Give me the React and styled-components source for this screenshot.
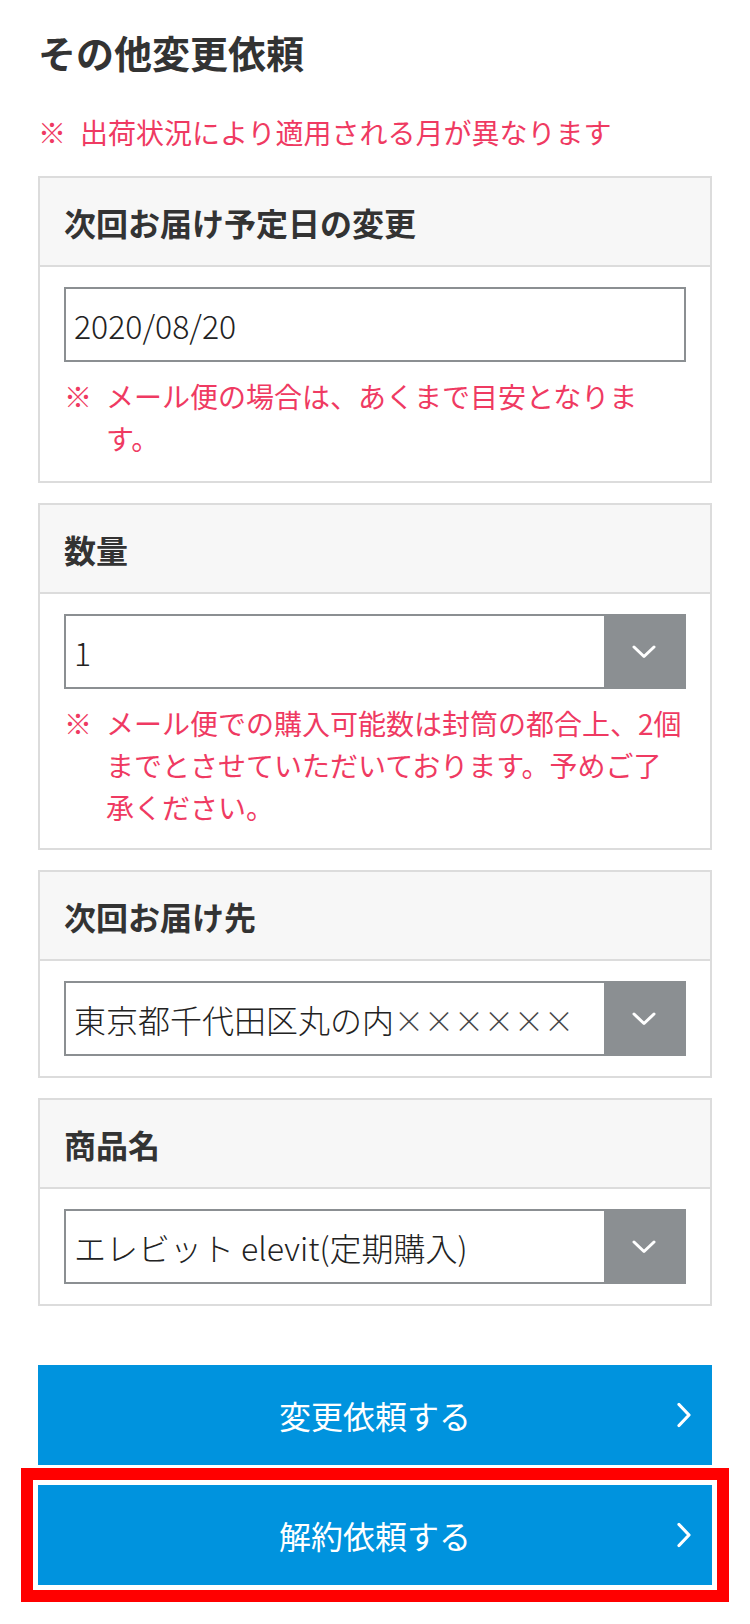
import React from "react";
import styled, { createGlobalStyle } from "styled-components";

const GlobalStyle = createGlobalStyle`
  html, body {
    margin: 0;
    padding: 0;
    background: #ffffff;
  }
  body {
    font-family: "Noto Sans CJK JP", "Noto Sans", sans-serif;
    color: #333333;
  }
`;

const Page = styled.div`
  width: 750px;
  box-sizing: border-box;
  padding: 25px 38px 38px;
`;

const Title = styled.h2`
  margin: 0 0 33px;
  font-size: 38px;
  line-height: 1.4;
  font-weight: 700;
  color: #333333;
`;

const Note = styled.div`
  display: flex;
  font-size: 28px;
  line-height: 42px;
  color: #ef3a62;
  margin: ${(p) => p.$margin || "0"};
`;

const Mark = styled.span`
  flex: 0 0 42px;
`;

const NoteText = styled.span`
  flex: 1;
  min-width: 0;
`;

const Cards = styled.div`
  display: flex;
  flex-direction: column;
  gap: 20px;
  margin-top: 23px;
`;

const Card = styled.section`
  border: 2px solid #dcdcdc;
  background: #ffffff;
`;

const CardHeader = styled.div`
  height: 87px;
  display: flex;
  align-items: center;
  padding: 0 24px;
  background: #f7f7f7;
  border-bottom: 2px solid #dcdcdc;
  font-size: 32px;
  font-weight: 700;
  color: #333333;
`;

const CardBody = styled.div`
  padding: 20px 24px 20px;
`;

const Field = styled.div`
  height: 71px;
  display: flex;
  align-items: stretch;
  border: 2px solid #8b8f92;
  background: #ffffff;
`;

const FieldValue = styled.div`
  flex: 1;
  min-width: 0;
  display: flex;
  align-items: center;
  padding: 0 8px;
  font-size: 32px;
  font-weight: 300;
  color: #222222;
  white-space: nowrap;
  overflow: hidden;
`;

const Cross = styled.span`
  font-feature-settings: "fwid";
  font-size: 30px;
  color: #444444;
`;

const SelectArrow = styled.div`
  flex: 0 0 80px;
  display: flex;
  align-items: center;
  justify-content: center;
  background: #8b8f92;
`;

const Actions = styled.div`
  display: flex;
  flex-direction: column;
  gap: 20px;
  margin-top: 59px;
`;

const ActionButton = styled.button`
  position: relative;
  width: 100%;
  height: 100px;
  border: none;
  margin: 0;
  padding: 0;
  background: #0093de;
  color: #ffffff;
  font-family: "Noto Sans CJK JP", "Noto Sans", sans-serif;
  font-size: 32px;
  font-weight: 400;
  display: flex;
  align-items: center;
  justify-content: center;
  cursor: pointer;
  outline: ${(p) => (p.$highlighted ? "12px solid #ff0000" : "none")};
  outline-offset: 5px;
`;

const ButtonChevron = styled.svg`
  position: absolute;
  right: 20px;
  top: 50%;
  transform: translateY(-50%);
`;

const ChevronDown = () => (
  <svg width="24" height="14" viewBox="0 0 24 14">
    <polyline
      points="2,2 12,11.5 22,2"
      fill="none"
      stroke="#ffffff"
      strokeWidth="3"
      strokeLinecap="round"
      strokeLinejoin="round"
    />
  </svg>
);

const ChevronRight = () => (
  <ButtonChevron width="15" height="25" viewBox="0 0 15 25">
    <polyline
      points="2,2 12,12.5 2,23"
      fill="none"
      stroke="#ffffff"
      strokeWidth="3.2"
      strokeLinecap="round"
      strokeLinejoin="round"
    />
  </ButtonChevron>
);

const Select = ({ children }) => (
  <Field>
    <FieldValue>{children}</FieldValue>
    <SelectArrow>
      <ChevronDown />
    </SelectArrow>
  </Field>
);

const App = () => {
  return (
    <>
      <GlobalStyle />
      <Page>
        <Title>その他変更依頼</Title>
        <Note>
          <Mark>※</Mark>
          <NoteText>出荷状況により適用される月が異なります</NoteText>
        </Note>

        <Cards>
          <Card>
            <CardHeader>次回お届け予定日の変更</CardHeader>
            <CardBody>
              <Field>
                <FieldValue>2020/08/20</FieldValue>
              </Field>
              <Note $margin="13px 0 2px">
                <Mark>※</Mark>
                <NoteText>メール便の場合は、あくまで目安となります。</NoteText>
              </Note>
            </CardBody>
          </Card>

          <Card>
            <CardHeader>数量</CardHeader>
            <CardBody>
              <Select>1</Select>
              <Note $margin="13px 0 0">
                <Mark>※</Mark>
                <NoteText>
                  メール便での購入可能数は封筒の都合上、2個までとさせていただいております。予めご了承ください。
                </NoteText>
              </Note>
            </CardBody>
          </Card>

          <Card>
            <CardHeader>次回お届け先</CardHeader>
            <CardBody>
              <Select>
                東京都千代田区丸の内<Cross>××××××</Cross>
              </Select>
            </CardBody>
          </Card>

          <Card>
            <CardHeader>商品名</CardHeader>
            <CardBody>
              <Select>エレビット elevit(定期購入)</Select>
            </CardBody>
          </Card>
        </Cards>

        <Actions>
          <ActionButton type="button">
            変更依頼する
            <ChevronRight />
          </ActionButton>
          <ActionButton type="button" $highlighted>
            解約依頼する
            <ChevronRight />
          </ActionButton>
        </Actions>
      </Page>
    </>
  );
};

export default App;
